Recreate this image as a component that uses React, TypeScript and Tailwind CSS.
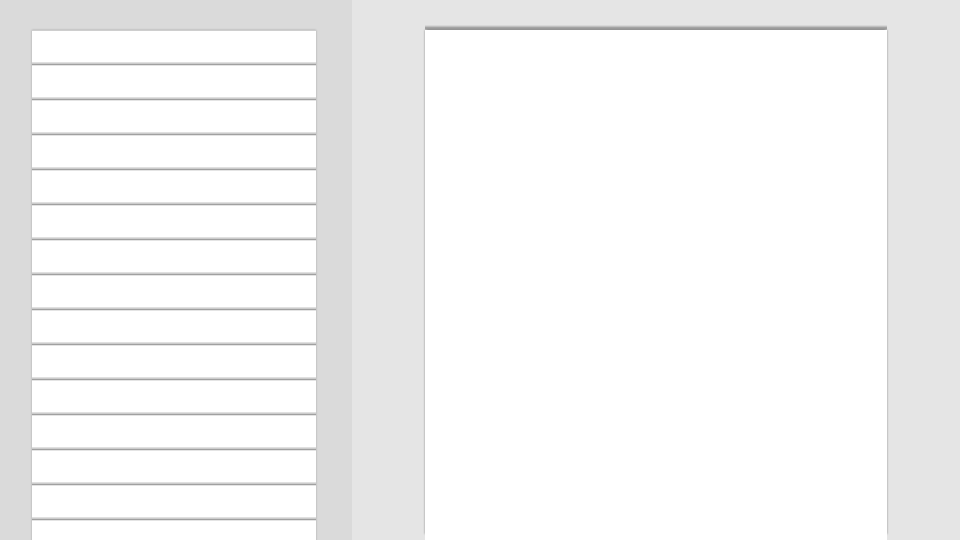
import React from 'react';

const ROW_COUNT = 15;

function ListRow() {
  return (
    <li className="flex h-[35px] flex-col border-t border-[#e4e4e4] bg-white first:h-[34px] first:border-t-0">
      <div className="flex-1" />
      <div className="h-px bg-[#e0e0e0]" />
      <div className="h-px bg-[#cccccc]" />
      <div className="h-px bg-[#a0a0a0]" />
    </li>
  );
}

function Sidebar() {
  return (
    <aside className="h-screen w-[352px] shrink-0 overflow-hidden bg-[#dadada] pt-[30px] pr-9 pl-8">
      <ul className="border-t border-[#cecece] shadow-[0_0_2px_rgba(0,0,0,0.25)]">
        {Array.from({ length: ROW_COUNT }, (_, i) => (
          <ListRow key={i} />
        ))}
      </ul>
    </aside>
  );
}

function Paper() {
  return (
    <main className="flex min-w-0 flex-1 flex-col px-[73px] pt-[25px]">
      <div className="h-px bg-[#d8d8d8]" />
      <div className="h-px bg-[#c0c0c0]" />
      <div className="h-0.5 bg-[#a4a4a4]" />
      <div className="h-px bg-[#c4c4c4]" />
      <section className="flex flex-1 flex-col bg-white">
        <div className="mb-1 flex-1 bg-white shadow-[-1px_-1px_2px_-1px_rgba(0,0,0,0.4),1px_-1px_2px_-1px_rgba(0,0,0,0.4)]" />
      </section>
    </main>
  );
}

export default function App() {
  return (
    <div className="flex h-screen overflow-hidden bg-[#e5e5e5]">
      <Sidebar />
      <Paper />
    </div>
  );
}
